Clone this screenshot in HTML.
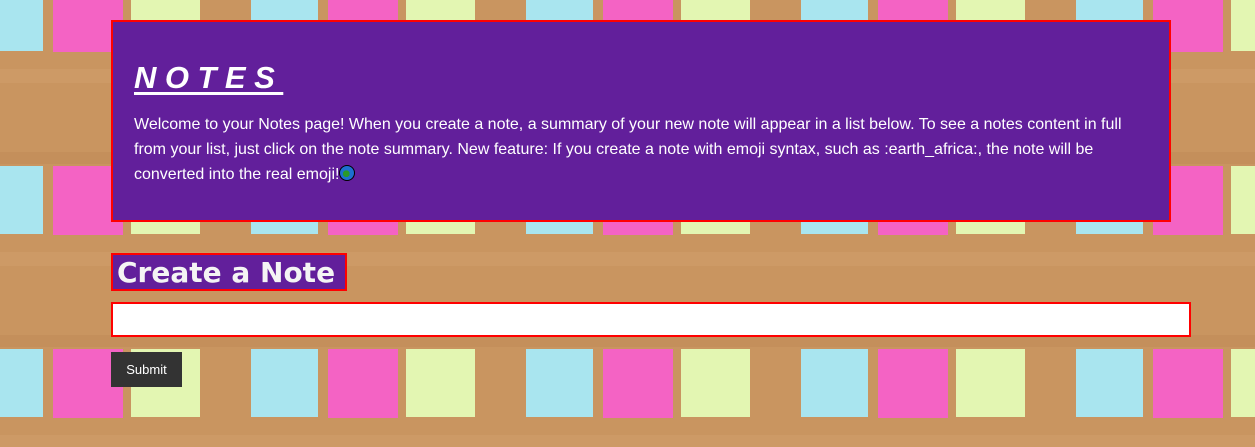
<!DOCTYPE html>
<html><head><style>
html,body{margin:0;padding:0;width:1255px;height:447px;overflow:hidden;position:relative;font-family:"Liberation Sans",Arial,sans-serif}
svg.bg{position:absolute;left:0;top:0}
.box{position:absolute;left:111px;top:20px;width:1056px;height:198px;background:#621f9b;border:2px solid #f00;color:#fff}
.box h1{position:absolute;left:21px;top:38px;margin:0;font-size:31px;font-style:italic;font-weight:bold;letter-spacing:8.5px;text-decoration:underline;text-decoration-thickness:3px;text-underline-offset:4px;font-family:"Liberation Sans",sans-serif}
.box p{position:absolute;left:21px;top:90px;margin:0;width:1010px;font-size:16px;line-height:25px}
.earth{display:inline-block;width:14px;height:14px;border-radius:50%;background:radial-gradient(circle at 45% 55%,#2a9a2a 30%,#1d6fd0 32%);border:1px solid #000;vertical-align:-2px}
.cn{position:absolute;left:111px;top:253px;width:228px;height:34px;background:#621f9b;border:2px solid #f00;color:#f4f4f4;font-family:"DejaVu Sans",sans-serif;font-weight:bold;font-size:28px;line-height:36px;padding-left:4px}
.inp{position:absolute;left:111px;top:302px;width:1076px;height:31px;background:#fff;border:2px solid #f00}
.btn{position:absolute;left:111px;top:352px;width:71px;height:35px;background:#333;color:#fff;font-size:13px;line-height:35px;text-align:center}
</style></head><body>
<svg class="bg" width="1255" height="447">
<defs><pattern id="t" x="-51" y="-71" width="275" height="183" patternUnits="userSpaceOnUse">
<rect width="275" height="183" fill="#c99560"/>
<rect y="40" width="275" height="12" fill="#b98350" opacity=".3"/>
<rect y="140" width="275" height="14" fill="#d8a874" opacity=".3"/>
<rect x="27" y="54" width="67" height="68" fill="#a9e5ef"/>
<rect x="104" y="54" width="70" height="69" fill="#f463c4"/>
<rect x="182" y="54" width="69" height="68" fill="#e3f6b2"/>
</pattern></defs>
<rect width="1255" height="447" fill="url(#t)"/>
</svg>
<div class="box">
<h1>NOTES</h1>
<p>Welcome to your Notes page! When you create a note, a summary of your new note will appear in a list below. To see a notes content in full from your list, just click on the note summary. New feature: If you create a note with emoji syntax, such as :earth_africa:, the note will be converted into the real emoji!<span class="earth"></span></p>
</div>
<div class="cn">Create a Note</div>
<div class="inp"></div>
<div class="btn">Submit</div>
</body></html>
